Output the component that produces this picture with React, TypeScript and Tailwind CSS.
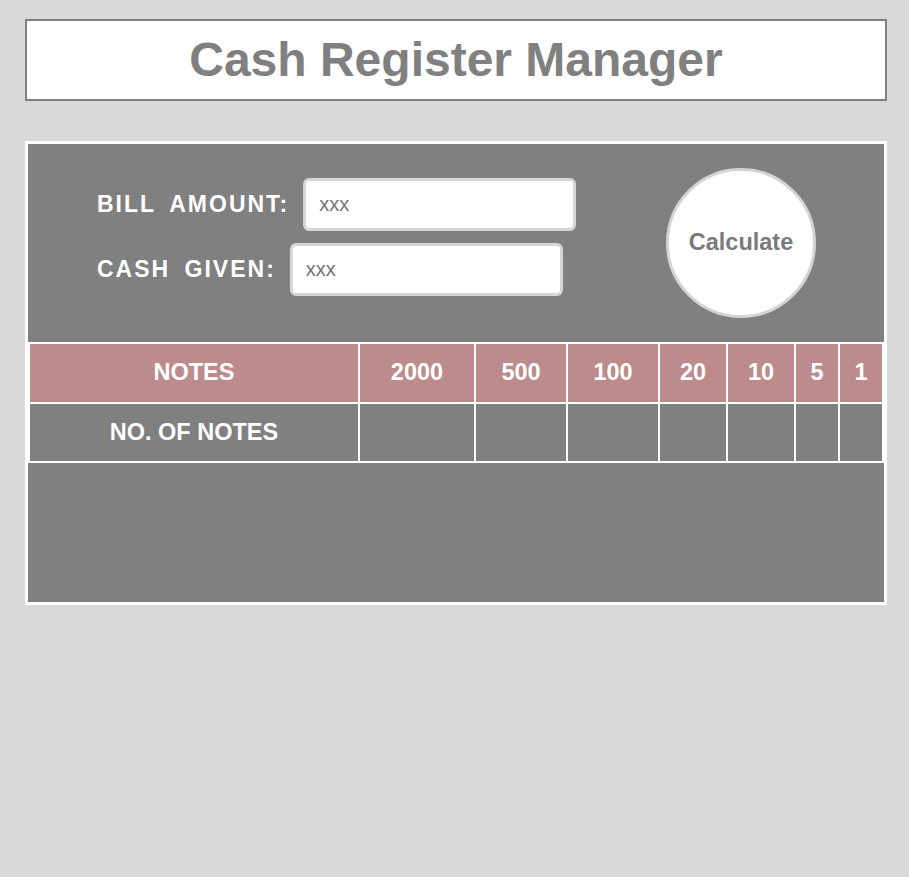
const notes = ["2000", "500", "100", "20", "10", "5", "1"];

export default function App() {
  return (
    <div className="min-h-[877px] bg-[#d9d9d9] pt-[19px] font-['Liberation_Sans',Arial,sans-serif]">
      <header className="ml-[25px] flex h-[82px] w-[862px] items-center justify-center border-2 border-[#808080] bg-white">
        <h1 className="text-[48px] font-bold text-[#808080]">Cash Register Manager</h1>
      </header>

      <main className="ml-[25px] mt-[40px] w-[862px] border-[3px] border-white bg-[#808080]">
        <section className="flex h-[198px] items-center justify-between pl-[69px] pr-[68px]">
          <div className="flex flex-col gap-[12px] pb-[12px]">
            <div className="flex items-center gap-[14px]">
              <label className="text-[23px] font-bold tracking-[2px] text-white [word-spacing:6px]">
                BILL AMOUNT:
              </label>
              <input
                placeholder="xxx"
                className="h-[53px] w-[273px] rounded-[6px] border-[3px] border-[#d6d6d6] bg-white px-[13px] text-[20px] text-[#555] outline-none placeholder:text-[#757575]"
              />
            </div>
            <div className="flex items-center gap-[14px]">
              <label className="text-[23px] font-bold tracking-[2px] text-white [word-spacing:6px]">
                CASH GIVEN:
              </label>
              <input
                placeholder="xxx"
                className="h-[53px] w-[273px] rounded-[6px] border-[3px] border-[#d6d6d6] bg-white px-[13px] text-[20px] text-[#555] outline-none placeholder:text-[#757575]"
              />
            </div>
          </div>
          <button className="flex h-[150px] w-[150px] items-center justify-center rounded-full border-[3px] border-[#d4d4d4] bg-white text-[23.5px] font-bold text-[#7a7a7a]">
            Calculate
          </button>
        </section>

        <div className="grid grid-cols-[328px_114px_90px_90px_66px_66px_42px_42px] gap-[2px] bg-white p-[2px] text-[23.5px] font-bold text-white">
          <div className="flex h-[58px] items-center justify-center bg-[#bc8c8c]">NOTES</div>
          {notes.map((n) => (
            <div key={n} className="flex h-[58px] items-center justify-center bg-[#bc8c8c]">
              {n}
            </div>
          ))}
          <div className="flex h-[57px] items-center justify-center bg-[#808080]">NO. OF NOTES</div>
          {notes.map((n) => (
            <div key={n} className="h-[57px] bg-[#808080]" />
          ))}
        </div>

        <div className="h-[139px]" />
      </main>
    </div>
  );
}
